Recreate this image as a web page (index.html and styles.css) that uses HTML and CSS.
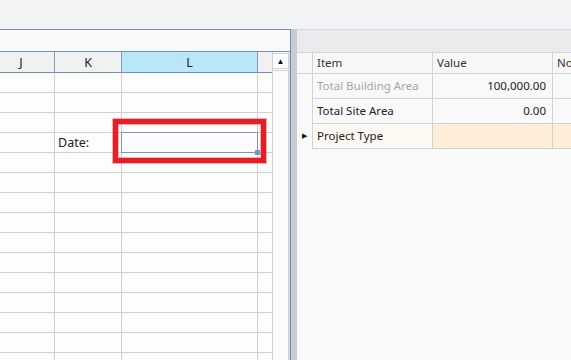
FILE: index.html
```html
<!DOCTYPE html>
<html lang="en">
<head>
    <meta charset="UTF-8">
    <title>Project Sheet</title>
    <link rel="stylesheet" href="styles.css">
</head>
<body>
    <div class="topbar"></div>
    <div class="workspace">
        <div class="sheet-panel">
            <div class="formula-bar"></div>
            <div class="sheet-body">
                <div class="sheet-grid">
                    <div class="row head">
                        <div class="cell c-j">J</div>
                        <div class="cell c-k">K</div>
                        <div class="cell c-l active">L</div>
                        <div class="cell c-x"></div>
                    </div>
                    <div id="sheet-rows"></div>
                    <div class="selection"><span class="handle"></span></div>
                    <div class="highlight"></div>
                </div>
                <div class="vscroll">
                    <div class="vscroll-btn">&#9650;</div>
                    <div class="vscroll-track"></div>
                </div>
            </div>
        </div>
        <div class="splitter"></div>
        <div class="props-panel">
            <div class="props-band"></div>
            <div class="props-grid">
                <div class="prow phead">
                    <div class="pcell rh"></div>
                    <div class="pcell item">Item</div>
                    <div class="pcell value">Value</div>
                    <div class="pcell note">Notes</div>
                </div>
                <div class="prow">
                    <div class="pcell rh"></div>
                    <div class="pcell item muted">Total Building Area</div>
                    <div class="pcell value num">100,000.00</div>
                    <div class="pcell note"></div>
                </div>
                <div class="prow">
                    <div class="pcell rh"></div>
                    <div class="pcell item">Total Site Area</div>
                    <div class="pcell value num">0.00</div>
                    <div class="pcell note"></div>
                </div>
                <div class="prow current">
                    <div class="pcell rh">&#9654;</div>
                    <div class="pcell item">Project Type</div>
                    <div class="pcell value"></div>
                    <div class="pcell note"></div>
                </div>
            </div>
        </div>
    </div>
    <script>
    // build the empty sheet rows, row 4 carries the "Date:" label
    var html = '';
    for (var i = 1; i <= 15; i++) {
        html += '<div class="row">' +
            '<div class="cell c-j"></div>' +
            '<div class="cell c-k">' + (i === 4 ? 'Date:' : '') + '</div>' +
            '<div class="cell c-l"></div>' +
            '<div class="cell c-x"></div>' +
            '</div>';
    }
    document.getElementById('sheet-rows').innerHTML = html;
    </script>
</body>
</html>
```

FILE: styles.css
```css
body {
    margin: 0;
    width: 571px;
    height: 360px;
    overflow: hidden;
    background: #f2f3f5;
    font-family: 'Segoe UI', 'Noto Sans', Arial, sans-serif;
    font-size: 12px;
    color: #222;
}
.topbar {
    height: 29px;
    background: #f2f3f5;
}
.workspace {
    display: flex;
    height: 331px;
}
.sheet-panel {
    width: 290px;
    border-top: 1px solid #6e8fb6;
    border-right: 1px solid #6e8fb6;
    background: #fdfdfd;
    display: flex;
    flex-direction: column;
    overflow: hidden;
}
.formula-bar {
    flex: none;
    height: 21px;
    background: #f9f9f9;
    border-bottom: 1px solid #6e8fb6;
}
.sheet-body {
    display: flex;
    flex: 1;
    min-height: 0;
    overflow: hidden;
}
.sheet-grid {
    position: relative;
    width: 272px;
    flex: none;
}
.row {
    display: flex;
    height: 20px;
}
.cell {
    box-sizing: border-box;
    height: 20px;
    border-right: 1px solid #d0d0d0;
    border-bottom: 1px solid #d0d0d0;
    background: #fdfdfd;
    padding-left: 3px;
    line-height: 19px;
    font-size: 12.5px;
    white-space: nowrap;
}
.c-j { width: 55px; }
.c-k { width: 67px; }
.c-l { width: 136px; }
.c-x { width: 14px; border-right: none; }
.row.head { height: 21px; }
.row.head .cell {
    height: 21px;
    line-height: 21px;
    background: #f1f1f1;
    border-right-color: #7d9cc0;
    border-bottom-color: #6e8fb6;
    text-align: center;
    padding-left: 0;
    color: #222;
}
.row.head .cell.active { background: #b9e6f9; }
.row.head .c-j { text-indent: -12px; }
.selection {
    position: absolute;
    left: 121px;
    top: 80px;
    width: 135px;
    height: 19px;
    border: 1px solid #7b96b8;
}
.handle {
    position: absolute;
    right: -3px;
    bottom: -3px;
    width: 5px;
    height: 5px;
    background: #7b96b8;
}
.highlight {
    position: absolute;
    left: 113px;
    top: 67px;
    width: 143px;
    height: 34px;
    border: 5px solid #e41f25;
    box-shadow: 0 0 0 1px rgba(228, 31, 37, 0.35), inset 0 0 0 1px rgba(228, 31, 37, 0.35);
}
.vscroll {
    width: 16px;
    flex: none;
    border-left: 1px solid #c8d0d8;
    border-right: 1px solid #d3d6da;
    background: #fbfbfb;
    display: flex;
    flex-direction: column;
}
.vscroll-btn {
    flex: none;
    height: 14px;
    margin-top: 1px;
    border: 1px solid #cfd3d7;
    border-left: none;
    background: #fdfdfd;
    font-size: 8px;
    line-height: 14px;
    text-align: center;
    color: #111;
}
.vscroll-track {
    flex: 1;
    margin-top: 1px;
    border-top: 1px solid #cfd3d7;
    border-right: 1px solid #cfd3d7;
}
.splitter {
    width: 6px;
    flex: none;
    background: #c5ccd3;
}
.props-panel {
    flex: 1;
    background: #f9f9f9;
    border-top: 1px solid #d6d9dd;
    overflow: hidden;
}
.props-band {
    height: 22px;
    background: #e9ebed;
}
.props-grid {
    border-top: 1px solid #d0d4d8;
}
.prow {
    display: flex;
    height: 25px;
}
.pcell {
    box-sizing: border-box;
    height: 25px;
    flex: none;
    border-right: 1px solid #d0d4d8;
    border-bottom: 1px solid #d0d4d8;
    padding: 0 6px 0 4px;
    line-height: 24px;
    font-size: 11.5px;
    white-space: nowrap;
    overflow: hidden;
}
.pcell.rh {
    width: 16px;
    border-bottom: none;
    padding: 0;
    text-align: center;
    font-size: 7px;
    color: #111;
}
.pcell.item { width: 120px; }
.pcell.value { width: 120px; }
.pcell.note { width: 40px; border-right: none; }
.prow.phead { height: 21px; }
.prow.phead .pcell {
    height: 21px;
    line-height: 20px;
    background: #f7f7f7;
    color: #333;
}
.prow.phead .pcell.rh { border-bottom: 1px solid #d0d4d8; }
.pcell.num { text-align: right; }
.pcell.muted { color: #a5a5a5; }
.prow.current .item { background: #fcf8f2; }
.prow.current .value, .prow.current .note { background: #feeed9; }
```
